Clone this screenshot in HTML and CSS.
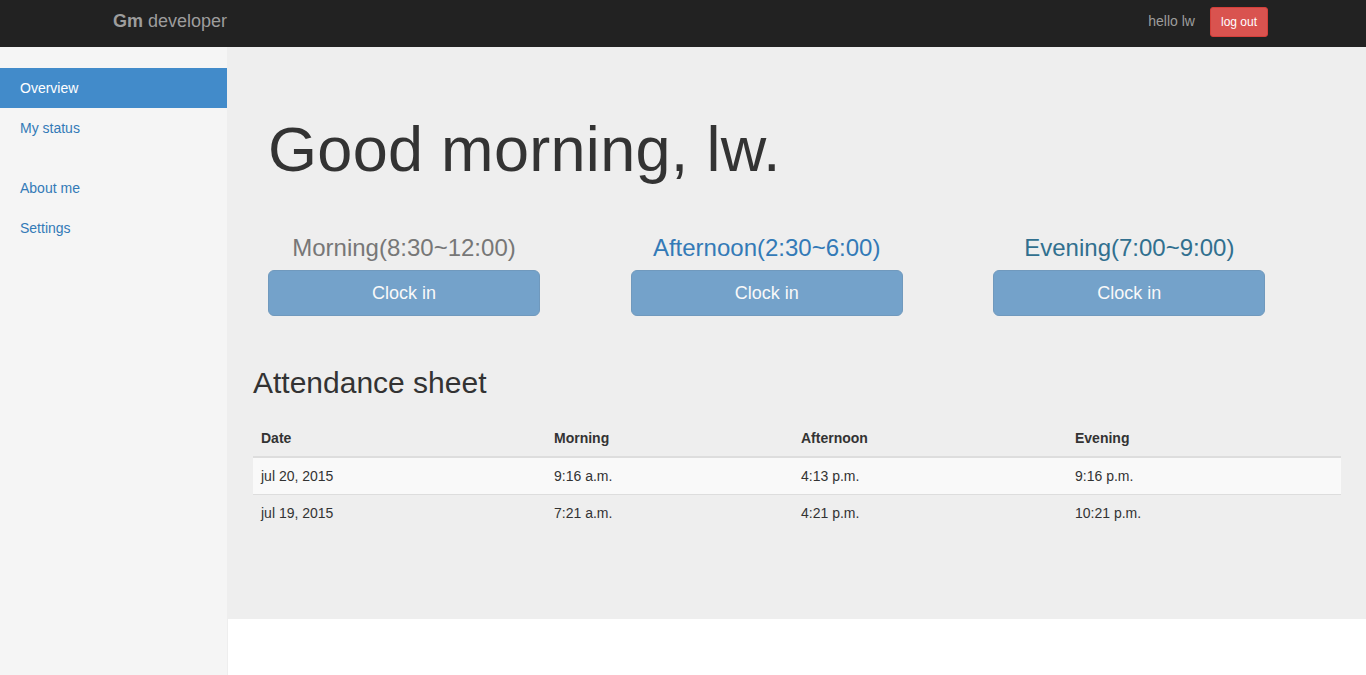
FILE: index.html
```html
<!DOCTYPE html>
<html lang="en">
<head>
<meta charset="utf-8">
<title>Gm developer</title>
<link rel="stylesheet" href="styles.css">
</head>
<body>
<header class="navbar">
  <a class="brand" href="#"><b>Gm</b> developer</a>
  <div class="nav-right">
    <span class="hello">hello lw</span>
    <button class="btn-logout">log out</button>
  </div>
</header>
<div class="layout">
  <aside class="sidebar">
    <ul class="nav-group">
      <li><a class="active" href="#">Overview</a></li>
      <li><a href="#">My status</a></li>
    </ul>
    <ul class="nav-group">
      <li><a href="#">About me</a></li>
      <li><a href="#">Settings</a></li>
    </ul>
  </aside>
  <div class="content">
    <main class="jumbo">
      <h1 class="greeting">Good morning, lw.</h1>
      <div class="shifts">
        <div class="shift">
          <div class="shift-inner">
            <h3 class="shift-title muted">Morning(8:30~12:00)</h3>
            <button class="btn-clock" disabled>Clock in</button>
          </div>
        </div>
        <div class="shift">
          <div class="shift-inner">
            <h3 class="shift-title primary">Afternoon(2:30~6:00)</h3>
            <button class="btn-clock" disabled>Clock in</button>
          </div>
        </div>
        <div class="shift">
          <div class="shift-inner">
            <h3 class="shift-title info">Evening(7:00~9:00)</h3>
            <button class="btn-clock" disabled>Clock in</button>
          </div>
        </div>
      </div>
      <h2 class="sheet-title">Attendance sheet</h2>
      <table class="sheet">
        <colgroup>
          <col class="c-date"><col class="c-morning"><col class="c-afternoon"><col class="c-evening">
        </colgroup>
        <thead>
          <tr><th>Date</th><th>Morning</th><th>Afternoon</th><th>Evening</th></tr>
        </thead>
        <tbody>
          <tr class="striped"><td>jul 20, 2015</td><td>9:16 a.m.</td><td>4:13 p.m.</td><td>9:16 p.m.</td></tr>
          <tr><td>jul 19, 2015</td><td>7:21 a.m.</td><td>4:21 p.m.</td><td>10:21 p.m.</td></tr>
        </tbody>
      </table>
    </main>
  </div>
</div>
</body>
</html>
```

FILE: styles.css
```css
* { box-sizing: border-box; }
html, body { margin: 0; padding: 0; }
body {
  font-family: "Liberation Sans", Arial, Helvetica, sans-serif;
  font-size: 14px;
  line-height: 1.42857;
  color: #333;
  background: #fff;
  height: 675px;
  overflow: hidden;
}
a { text-decoration: none; }

.navbar {
  height: 47px;
  background: #222;
  display: flex;
  align-items: flex-start;
  justify-content: space-between;
  padding: 7px 98px 0 113px;
}
.brand {
  font-size: 18px;
  color: #9d9d9d;
  line-height: 20px;
  margin-top: 4px;
}
.brand b { font-weight: bold; }
.nav-right {
  display: flex;
  align-items: center;
  gap: 15px;
}
.hello {
  color: #9d9d9d;
  font-size: 14px;
}
.btn-logout {
  font-family: inherit;
  background: #d9534f;
  border: 1px solid #d43f3a;
  color: #fff;
  font-size: 12px;
  line-height: 18px;
  padding: 5px 10px;
  border-radius: 3px;
  height: 30px;
  white-space: nowrap;
}

.layout {
  display: flex;
  height: 628px;
}
.sidebar {
  width: 228px;
  flex: 0 0 228px;
  background: #f5f5f5;
  border-right: 1px solid #eee;
  padding-top: 21px;
}
.nav-group {
  list-style: none;
  margin: 0 0 20px;
  padding: 0;
}
.nav-group a {
  display: block;
  padding: 10px 20px;
  line-height: 20px;
  color: #337ab7;
}
.nav-group a.active {
  background: #428bca;
  color: #fff;
}

.content {
  flex: 1;
  min-width: 0;
}
.jumbo {
  background: #eee;
  height: 572px;
  padding: 68px 25px 0;
}
.greeting {
  margin: 0 0 0 15px;
  font-size: 63px;
  font-weight: 500;
  line-height: 1.1;
  letter-spacing: 0.3px;
  color: #333;
}
.shifts {
  display: flex;
  margin-top: 51px;
}
.shift {
  flex: 1;
  padding-left: 15px;
}
.shift-inner {
  width: 272px;
  text-align: center;
}
.shift-title {
  margin: 0 0 8px;
  font-size: 24px;
  font-weight: 500;
  line-height: 1.1;
}
.shift-title.muted { color: #777; }
.shift-title.primary { color: #337ab7; }
.shift-title.info { color: #31708f; }
.btn-clock {
  display: block;
  width: 272px;
  height: 46px;
  font-family: inherit;
  font-size: 18px;
  line-height: 24px;
  padding: 10px 16px;
  border-radius: 6px;
  color: #fff;
  background: #337ab7;
  border: 1px solid #2e6da4;
  opacity: 0.65;
}
.sheet-title {
  margin: 50px 0 21px;
  font-size: 30px;
  font-weight: 500;
  line-height: 1.1;
  color: #333;
}
.sheet {
  width: 100%;
  border-collapse: collapse;
  border-spacing: 0;
  table-layout: fixed;
}
.c-date { width: 293px; }
.c-morning { width: 247px; }
.c-afternoon { width: 274px; }
.c-evening { width: 274px; }
.sheet th,
.sheet td {
  padding: 8px;
  line-height: 20px;
  text-align: left;
  vertical-align: top;
}
.sheet th {
  font-weight: bold;
  border-bottom: 2px solid #ddd;
}
.sheet tbody tr + tr td { border-top: 1px solid #ddd; }
.sheet tr.striped { background: #f9f9f9; }
```
